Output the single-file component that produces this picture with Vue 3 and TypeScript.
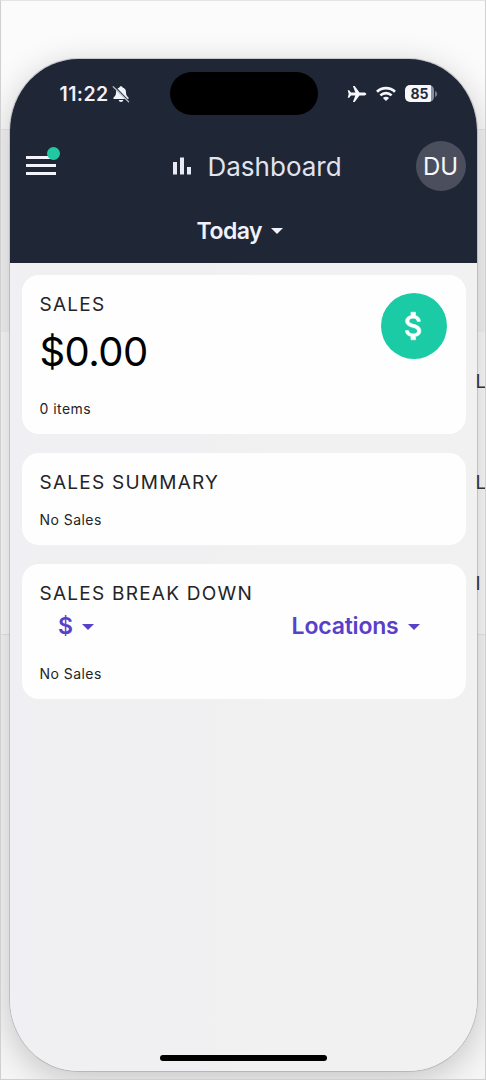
<script setup lang="ts">
interface BackdropLabel {
  text: string
  top: number
}

const backdropLabels: BackdropLabel[] = [
  { text: 'L', top: 370 },
  { text: 'L', top: 471 },
  { text: 'I', top: 572 },
]
</script>

<template>
  <div class="stage">
    <div class="band upper"></div>
    <div class="band middle"></div>
    <div class="band lower"></div>
    <div class="phone">
      <header class="header">
        <div class="status">
          <div class="clock">
            <span class="time">11:22</span>
            <svg class="bell" viewBox="0 0 18 18">
              <path d="M9 1.200c-.9 0-1.500.6-1.600 1.400C5 3.300 4 5 4 7.300 4 10.300 3 11.300 1.600 12.600c-.6.6-.3 1.300.5 1.300h13.800c.8 0 1.100-.7.5-1.300C15 11.300 14 10.300 14 7.300c0-2.300-1-4-3.400-4.700C10.500 1.800 9.900 1.200 9 1.200zM6.700 15h4.600c-.2 1.200-1.100 2-2.300 2s-2.100-.8-2.300-2z" fill="#f1f3fa" />
              <path d="M2.400 1.200l14.600 15" stroke="#1f2636" stroke-width="1.100" />
              <path d="M1.200 1.800l15.400 15" stroke="#b4b8c4" stroke-width="1.300" stroke-linecap="round" />
            </svg>
          </div>
          <div class="island"></div>
          <div class="signals">
            <svg class="plane" viewBox="0 0 20 18">
              <path d="M19.300 9c0-.9-1.200-1.500-2.500-1.500h-4.300L7.700 .9H5.900l2.400 6.600H4L2.200 5.200H.7L1.700 9 .7 12.800h1.500L4 10.500h4.300l-2.400 6.600h1.800l4.800-6.600h4.300c1.300 0 2.500-.6 2.500-1.500z" fill="#f6f7fc" />
            </svg>
            <svg class="wifi" viewBox="0 0 20 16">
              <g fill="none" stroke="#f6f7fc" stroke-width="2.700">
                <path d="M1 5.800C6 .9 14 .9 19 5.800" />
                <path d="M4.400 9.400c3.200-3.100 8-3.100 11.200 0" />
              </g>
              <path d="M6.900 11.900c1.800-1.600 4.400-1.600 6.200 0L10 15z" fill="#f6f7fc" />
            </svg>
            <div class="battery"><span class="charge">85</span></div>
            <svg class="nub" viewBox="0 0 3 6"><path d="M0 0c3 1 3 5 0 6z" fill="#777c8b" /></svg>
          </div>
        </div>
        <div class="toolbar">
          <button class="menu" aria-label="Menu">
            <i></i><i></i><i></i>
            <span class="dot"></span>
          </button>
          <div class="title">
            <svg class="bars" viewBox="0 0 18 18">
              <path d="M0 5h4v12.500H0zM7 .5h4v17H7zM14 10h4v7.500h-4z" fill="#e7e9f4" />
            </svg>
            <h1>Dashboard</h1>
          </div>
          <div class="avatar">DU</div>
        </div>
        <div class="period">
          <span>Today</span>
          <svg class="caret" viewBox="0 0 12 6"><path d="M0 0h12L6 6z" fill="currentColor" /></svg>
        </div>
      </header>

      <main class="cards">
        <section class="card sales">
          <div>
            <h2>SALES</h2>
            <div class="amount">$0.00</div>
            <p class="items">0 items</p>
          </div>
          <div class="coin">
            <svg viewBox="5.500 2.500 13 19">
              <path d="M11.800 10.900c-2.270-.59-3-1.200-3-2.150 0-1.090 1.010-1.850 2.700-1.850 1.780 0 2.440.85 2.500 2.100h2.210c-.07-1.720-1.120-3.300-3.210-3.810V3h-3v2.160c-1.940.42-3.500 1.680-3.500 3.610 0 2.310 1.910 3.460 4.700 4.130 2.500.6 3 1.480 3 2.410 0 .69-.49 1.790-2.700 1.790-2.060 0-2.870-.92-2.980-2.100h-2.200c.12 2.190 1.760 3.420 3.680 3.830V21h3v-2.150c1.950-.37 3.500-1.500 3.500-3.550 0-2.840-2.430-3.810-4.700-4.400z" fill="#fff" stroke="#fff" stroke-width=".3" />
            </svg>
          </div>
        </section>

        <section class="card summary">
          <h2>SALES SUMMARY</h2>
          <p>No Sales</p>
        </section>

        <section class="card breakdown">
          <h2>SALES BREAK DOWN</h2>
          <div class="filters">
            <div class="filter">
              <span>$</span>
              <svg class="caret" viewBox="0 0 12 6"><path d="M0 0h12L6 6z" fill="currentColor" /></svg>
            </div>
            <div class="filter">
              <span class="locations">Locations</span>
              <svg class="caret" viewBox="0 0 12 6"><path d="M0 0h12L6 6z" fill="currentColor" /></svg>
            </div>
          </div>
          <p>No Sales</p>
        </section>
      </main>
      <div class="home"></div>
    </div>
    <span v-for="label in backdropLabels" :key="label.top" class="label" :style="{ top: label.top + 'px' }">{{ label.text }}</span>
  </div>
</template>

<style>
body {
  margin: 0;
}
</style>

<style scoped>
* {
  box-sizing: border-box;
}
.stage {
  position: relative;
  display: flex;
  flex-direction: column;
  width: 486px;
  height: 1080px;
  overflow: hidden;
  background: #fbfbfb;
  font-family: Inter, "Liberation Sans", sans-serif;
}
.stage::after {
  content: "";
  position: absolute;
  inset: 0;
  border: 1px solid #d0d0d0;
  border-top-color: #e4e4e4;
}
.band {
  flex: none;
  border-top: 1px solid #e6e7e9;
}
.upper {
  margin-top: 129px;
  height: 203px;
  background: #f3f3f5;
}
.middle {
  height: 302px;
  background: #fbfbfb;
  border-top: 0;
}
.lower {
  height: 446px;
  background: #f6f6f6;
}
.phone {
  position: absolute;
  left: 9.500px;
  top: 58.500px;
  width: 467px;
  height: 1012px;
  display: flex;
  flex-direction: column;
  overflow: hidden;
  border-radius: 68px / 72px;
  background: linear-gradient(90deg, #f0f0f4 0, #f0f0f2 190px, #f1f1f1 260px);
  box-shadow: 0 0 0 1px rgba(120, 120, 125, 0.3), 0 8px 34px rgba(0, 0, 0, 0.21);
}
.header {
  flex: none;
  height: 204.500px;
  background: #1f2636;
  color: #f0f1fa;
}
.status {
  display: grid;
  grid-template-columns: 160px 148px 1fr;
  align-items: center;
  padding-top: 13.500px;
}
.clock {
  display: flex;
  align-items: center;
  padding-left: 50px;
}
.time {
  width: 52.500px;
  font-size: 19.500px;
  font-weight: 600;
  letter-spacing: 0.400px;
  line-height: 24px;
}
.bell {
  flex: none;
  width: 18px;
  height: 18px;
}
.island {
  height: 43px;
  border-radius: 22px;
  background: #000;
}
.signals {
  display: flex;
  align-items: center;
  padding-left: 29.500px;
}
.plane {
  width: 20px;
  height: 18px;
}
.wifi {
  width: 20px;
  height: 16px;
  margin-left: 9px;
}
.battery {
  width: 29px;
  height: 17px;
  margin-left: 9px;
  border-radius: 5px;
  background: linear-gradient(90deg, #f8f8fc 0 26px, #8a8f9d 26px);
}
.charge {
  display: block;
  width: 29px;
  color: #242a3a;
  font-size: 14px;
  font-weight: 700;
  line-height: 17px;
  text-align: center;
}
.nub {
  width: 3px;
  height: 6px;
  margin-left: 1px;
}
.toolbar {
  display: flex;
  align-items: center;
  height: 50px;
  margin-top: 25.500px;
  padding: 0 11px 0 16px;
}
.menu {
  position: relative;
  display: flex;
  flex-direction: column;
  gap: 5px;
  width: 30px;
  padding: 0;
  border: 0;
  background: none;
}
.menu i {
  height: 3px;
  background: #f3f4fb;
}
.dot {
  position: absolute;
  left: 21.500px;
  top: -9.500px;
  width: 13px;
  height: 13px;
  border-radius: 50%;
  background: #22c8a2;
}
.title {
  display: flex;
  align-items: center;
  margin-left: 117px;
}
.bars {
  width: 18px;
  height: 18px;
}
h1 {
  margin: 2px 0 0 17px;
  color: #e1e3ee;
  font-size: 26px;
  font-weight: 400;
  line-height: 32px;
  letter-spacing: 0;
}
.avatar {
  width: 50px;
  height: 50px;
  margin-left: auto;
  border-radius: 50%;
  background: #4b4f5d;
  color: #f6f7fd;
  font-size: 24px;
  line-height: 51px;
  text-align: center;
}
.period {
  display: flex;
  align-items: center;
  margin: 25px 0 0 187px;
  font-size: 23px;
  font-weight: 600;
  line-height: 30px;
  letter-spacing: -0.500px;
}
.caret {
  width: 12px;
  height: 6px;
  margin-left: 9px;
}
.cards {
  display: flex;
  flex-direction: column;
  gap: 19px;
  padding: 12px 11px 0 12.500px;
}
.card {
  padding: 18px 17px 0 17.500px;
  border-radius: 17px;
  background: #fefefe;
  color: #242426;
}
.sales {
  display: flex;
  justify-content: space-between;
  height: 159px;
}
.summary {
  height: 92px;
}
.breakdown {
  height: 135px;
}
h2 {
  margin: 0;
  font-size: 19px;
  font-weight: 400;
  line-height: 24px;
  letter-spacing: 1.250px;
}
.amount {
  margin-top: 11px;
  color: #000;
  font-size: 40px;
  line-height: 48px;
  letter-spacing: -0.550px;
}
p {
  margin: 15px 0 0;
  font-size: 14px;
  line-height: 20px;
  letter-spacing: 0.450px;
}
.items {
  margin-top: 23px;
}
.coin {
  display: grid;
  place-items: center;
  width: 66px;
  height: 66px;
  margin-right: 2px;
  border-radius: 50%;
  background: #1acba5;
}
.coin svg {
  width: 20px;
  height: 30px;
}
.filters {
  display: flex;
  justify-content: space-between;
  padding: 6px 29px 0 18.500px;
  color: #5940c8;
  font-size: 23px;
  font-weight: 600;
  line-height: 29px;
}
.filter {
  display: flex;
  align-items: center;
}
.locations {
  letter-spacing: -0.200px;
}
.breakdown p {
  margin-top: 23px;
}
.home {
  width: 167px;
  height: 6px;
  margin: auto auto 10px 150.500px;
  border-radius: 3px;
  background: #000;
}
.label {
  position: absolute;
  left: 475.500px;
  color: #333;
  font-size: 19px;
  line-height: 24px;
}
</style>
